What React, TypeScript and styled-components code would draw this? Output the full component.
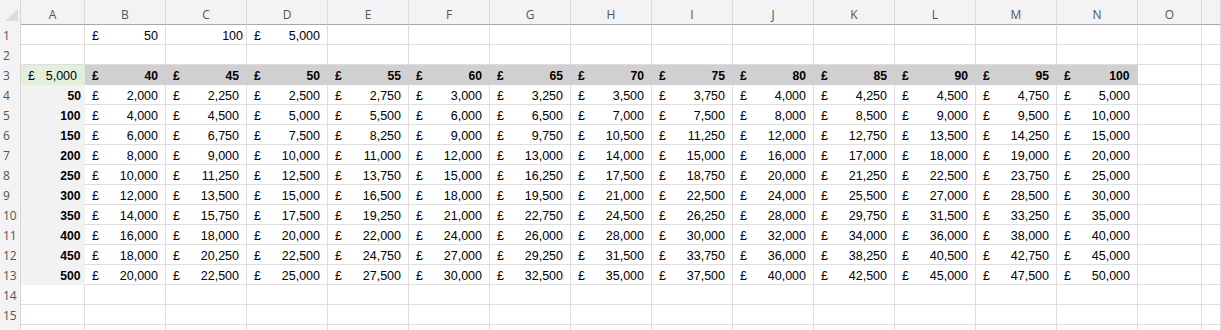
import React from "react";
import styled, { createGlobalStyle } from "styled-components";

const GRID = "#dedede";
const HEAD_BG = "#f3f3f3";
const GREY_FILL = "#d0d0d0";
const LIGHT_FILL = "#f2f2f2";
const GREEN_FILL = "#e2efda";

const LETTERS = ["A", "B", "C", "D", "E", "F", "G", "H", "I", "J", "K", "L", "M", "N", "O", ""];
const RATES = [40, 45, 50, 55, 60, 65, 70, 75, 80, 85, 90, 95, 100];
const QTY = [50, 100, 150, 200, 250, 300, 350, 400, 450, 500];

type CellData = {
  kind: "acct" | "num" | "empty";
  value?: number;
  bold?: boolean;
  fill?: string;
};

const fmt = (n: number) => n.toString().replace(/\B(?=(\d{3})+(?!\d))/g, ",");

// what lives in row r (1-based), column c (0 = A)
const cellAt = (r: number, c: number): CellData => {
  if (r === 1) {
    if (c === 1) return { kind: "acct", value: 50 };
    if (c === 2) return { kind: "num", value: 100 };
    if (c === 3) return { kind: "acct", value: 5000 };
  }
  if (r === 3) {
    if (c === 0) return { kind: "acct", value: 5000, fill: GREEN_FILL };
    if (c >= 1 && c <= 13)
      return { kind: "acct", value: RATES[c - 1], bold: true, fill: GREY_FILL };
  }
  if (r >= 4 && r <= 13) {
    const q = QTY[r - 4];
    if (c === 0) return { kind: "num", value: q, bold: true, fill: LIGHT_FILL };
    if (c >= 1 && c <= 13) return { kind: "acct", value: q * RATES[c - 1] };
  }
  return { kind: "empty" };
};

const GlobalStyle = createGlobalStyle`
  html, body {
    margin: 0;
    padding: 0;
    background: #ffffff;
  }
  * {
    box-sizing: border-box;
  }
`;

const Sheet = styled.div`
  width: 1221px;
  height: 330px;
  overflow: hidden;
  display: grid;
  grid-template-columns: 21px 64px repeat(13, 81px) 64px 1fr;
  grid-template-rows: 25px;
  grid-auto-rows: 20px;
  background: #ffffff;
  font-family: "Liberation Sans", Arial, sans-serif;
  color: #000000;
`;

const Corner = styled.div`
  position: relative;
  background: ${HEAD_BG};
  border-right: 1px solid #d6d6d6;

  & svg {
    position: absolute;
    left: 5px;
    top: 9px;
  }
`;

const ColHead = styled.div`
  display: flex;
  align-items: center;
  justify-content: center;
  padding-top: 4px;
  background: ${HEAD_BG};
  border-right: 1px solid #dcdcdc;
  border-bottom: 1px solid #a8a8a8;
  font-family: "Open Sans", "Noto Sans", sans-serif;
  font-size: 12px;
  color: #555555;
`;

const RowHead = styled.div`
  display: flex;
  align-items: center;
  padding-left: 3px;
  background: ${HEAD_BG};
  border-right: 1px solid #d6d6d6;
  font-family: "Open Sans", "Noto Sans", sans-serif;
  font-size: 12px;
  color: #555555;
`;

const Cell = styled.div<{ $fill?: string; $kind: CellData["kind"]; $bold?: boolean }>`
  display: flex;
  align-items: flex-end;
  justify-content: ${(p) => (p.$kind === "acct" ? "space-between" : "flex-end")};
  padding: ${(p) => (p.$kind === "acct" ? "0 7px 1px 7px" : "0 3px 1px 0")};
  background: ${(p) => p.$fill || "transparent"};
  border-right: 1px solid ${(p) => p.$fill || GRID};
  border-bottom: 1px solid ${(p) => p.$fill || GRID};
  white-space: nowrap;
  line-height: 14px;
  font-size: ${(p) => (p.$bold ? "13.5px" : "12.5px")};
  font-weight: ${(p) => (p.$bold ? 700 : 400)};
`;

// the bold figures in the sheet are a touch condensed
const Pound = styled.span<{ $bold?: boolean }>`
  display: inline-block;
  transform-origin: left bottom;
  transform: ${(p) => (p.$bold ? "scaleX(0.9)" : "none")};
`;

const Amount = styled.span<{ $bold?: boolean }>`
  display: inline-block;
  transform-origin: right bottom;
  transform: ${(p) => (p.$bold ? "scaleX(0.9)" : "none")};
`;

const SelectAll = () => (
  <svg width="13" height="12" viewBox="0 0 13 12">
    <polygon points="13,0 13,12 0,12" fill="#dcdcdc" />
  </svg>
);

const App = () => {
  const rows = Array.from({ length: 16 }, (_, i) => i + 1);
  return (
    <>
      <GlobalStyle />
      <Sheet>
        <Corner>
          <SelectAll />
        </Corner>
        {LETTERS.map((l, i) => (
          <ColHead key={`h${i}`}>{l}</ColHead>
        ))}
        {rows.map((r) => (
          <React.Fragment key={r}>
            {/* row 16 only peeks in at the bottom edge, its number is below the fold */}
            <RowHead>{r < 16 ? r : ""}</RowHead>
            {LETTERS.map((_, c) => {
              const d = cellAt(r, c);
              return (
                <Cell key={c} $fill={d.fill} $kind={d.kind} $bold={d.bold}>
                  {d.kind === "acct" && (
                    <>
                      <Pound $bold={d.bold}>£</Pound>
                      <Amount $bold={d.bold}>{fmt(d.value!)}</Amount>
                    </>
                  )}
                  {d.kind === "num" && <Amount $bold={d.bold}>{fmt(d.value!)}</Amount>}
                </Cell>
              );
            })}
          </React.Fragment>
        ))}
      </Sheet>
    </>
  );
};

export default App;
